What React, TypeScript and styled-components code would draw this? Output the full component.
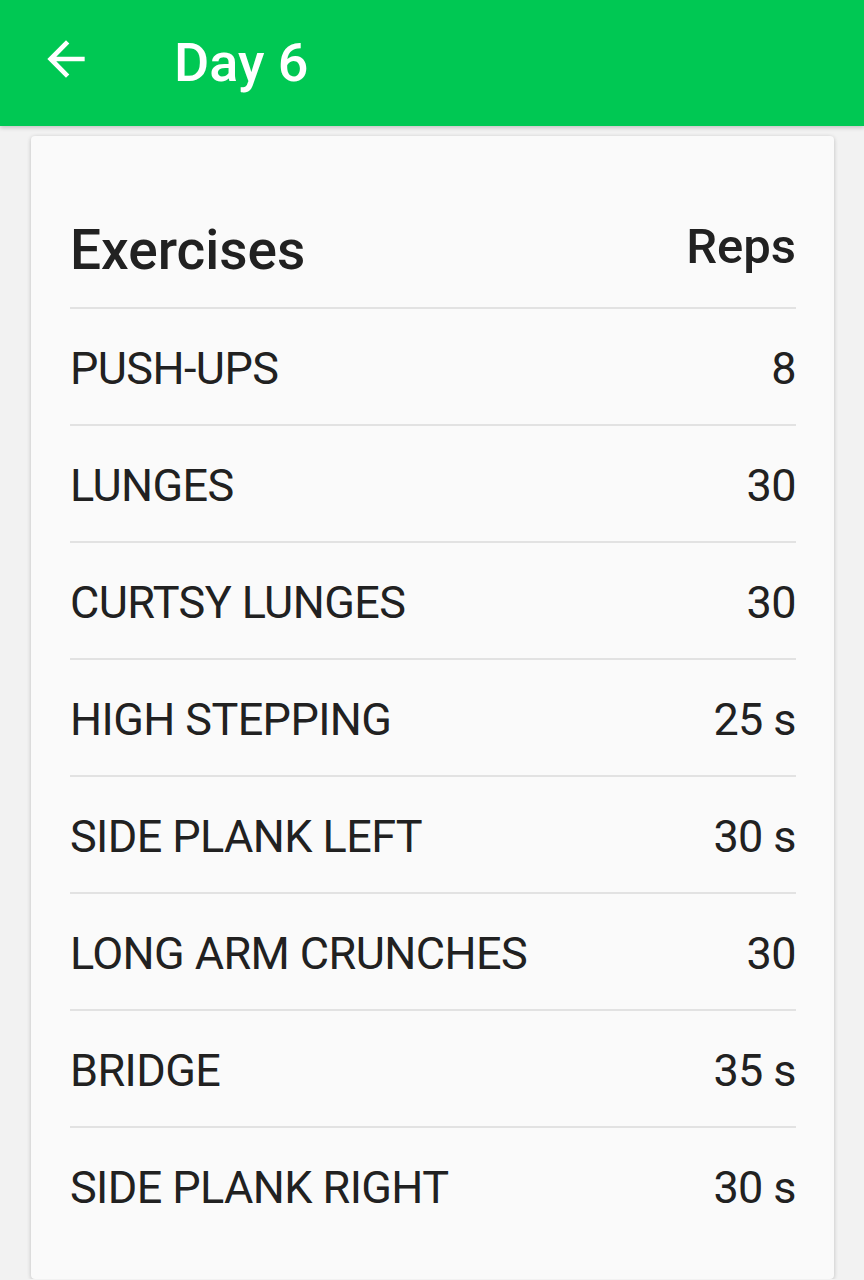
import React from "react";
import styled, { createGlobalStyle } from "styled-components";

const Global = createGlobalStyle`
  html, body { margin: 0; padding: 0; background: #f2f2f2; }
  body { font-family: Roboto, "Noto Sans", sans-serif; color: #212121; }
  * { box-sizing: border-box; }
`;

const AppBar = styled.header`
  height: 126px;
  background: #00c853;
  display: flex;
  align-items: center;
  padding-left: 38px;
  box-shadow: 0 2px 4px rgba(0, 0, 0, 0.18);
  position: relative;
  z-index: 1;
`;

const BackButton = styled.button`
  width: 56px;
  height: 56px;
  padding: 0;
  border: none;
  background: transparent;
  display: flex;
  align-items: center;
  justify-content: center;
  margin-top: -9px;
`;

const Title = styled.h1`
  margin: 0 0 0 80px;
  font-family: Roboto, sans-serif;
  font-weight: 500;
  font-size: 54px;
  line-height: 1;
  color: #ffffff;
`;

const Card = styled.section`
  margin: 10px 30px 0 31px;
  width: 803px;
  background: #fafafa;
  padding: 0 38px 36px 39px;
  border-radius: 4px;
  box-shadow: 0 1px 4px rgba(0, 0, 0, 0.22);
`;

const HeadRow = styled.div`
  height: 171px;
  display: flex;
  justify-content: space-between;
  align-items: flex-end;
  padding-bottom: 24px;
`;

const HeadCell = styled.span<{ $size: number; $lift?: number }>`
  font-weight: 500;
  font-size: ${(p) => p.$size}px;
  line-height: 1.2;
  color: #212121;
  margin-bottom: ${(p) => p.$lift ?? 0}px;
`;

const Row = styled.div`
  height: 117px;
  border-top: 2px solid #e2e2e2;
  display: flex;
  justify-content: space-between;
  align-items: center;
  padding-top: 4px;
`;

const Cell = styled.span`
  font-weight: 400;
  font-size: 45px;
  line-height: 1.2;
  color: #212121;
  letter-spacing: -0.6px;
`;

const data: [string, string][] = [
  ["PUSH-UPS", "8"],
  ["LUNGES", "30"],
  ["CURTSY LUNGES", "30"],
  ["HIGH STEPPING", "25 s"],
  ["SIDE PLANK LEFT", "30 s"],
  ["LONG ARM CRUNCHES", "30"],
  ["BRIDGE", "35 s"],
  ["SIDE PLANK RIGHT", "30 s"],
];

export default function App() {
  return (
    <>
      <Global />
      <AppBar>
        <BackButton aria-label="Back">
          <svg width="56" height="56" viewBox="0 0 24 24" fill="#ffffff">
            <path d="M20 11H7.83l5.59-5.59L12 4l-8 8 8 8 1.41-1.41L7.83 13H20v-2z" />
          </svg>
        </BackButton>
        <Title>Day 6</Title>
      </AppBar>
      <Card>
        <HeadRow>
          <HeadCell $size={55}>Exercises</HeadCell>
          <HeadCell $size={49} $lift={6}>Reps</HeadCell>
        </HeadRow>
        {data.map(([name, reps]) => (
          <Row key={name}>
            <Cell>{name}</Cell>
            <Cell>{reps}</Cell>
          </Row>
        ))}
      </Card>
    </>
  );
}
